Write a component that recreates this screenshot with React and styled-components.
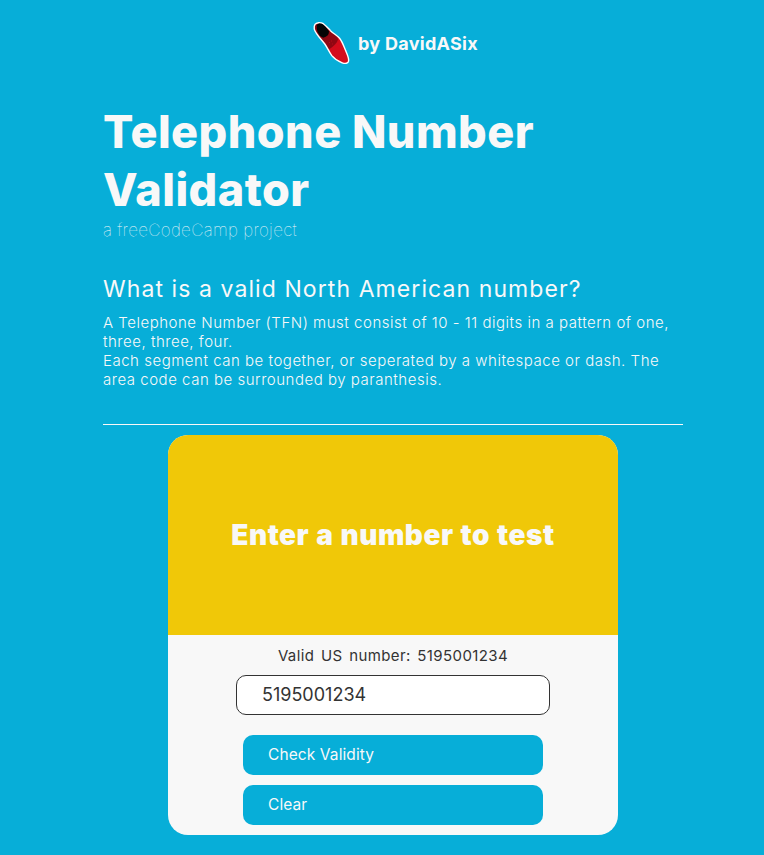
import React, { useState } from 'react';
import styled, { createGlobalStyle } from 'styled-components';

const BLUE = '#07aed8';
const LIGHT = '#f8f8f8';
const DARK = '#333333';

const GlobalStyle = createGlobalStyle`
  *, *::before, *::after { box-sizing: border-box; }
  html, body { margin: 0; background: ${BLUE}; }
  body { font-family: Inter, sans-serif; color: ${LIGHT}; }
  h1, h2, p { margin: 0; }
`;

const Page = styled.main`
  width: 580px;
  height: 855px;
  margin-left: 103px;
  display: flex;
  flex-direction: column;
`;

const Brand = styled.header`
  height: 103px;
  padding: 20px 0 0 208px;
  display: flex;
  align-items: flex-start;
  gap: 7px;
`;

const ShoeIcon = styled.svg`
  display: block;
  width: 40px;
  height: 46px;
  flex: none;
`;

const Byline = styled.span`
  font-size: 18px;
  font-weight: 650;
  line-height: 24px;
  letter-spacing: 0.28px;
  margin-top: 12px;
  white-space: nowrap;
`;

const Title = styled.h1`
  font-size: 45px;
  font-weight: 800;
  line-height: 58px;
  letter-spacing: 0.46px;
`;

const Tagline = styled.p`
  height: 22px;
  font-size: 17px;
  font-weight: 100;
  line-height: 22px;
  letter-spacing: 0.3px;
`;

const Question = styled.h2`
  margin-top: 34px;
  font-size: 23px;
  font-weight: 400;
  line-height: 28px;
  letter-spacing: 1.08px;
  white-space: nowrap;
`;

const Explanation = styled.div`
  margin-top: 10px;
  padding-bottom: 35px;
  border-bottom: 1px solid ${LIGHT};
  font-size: 15px;
  font-weight: 300;
  line-height: 19px;
  letter-spacing: 0.52px;
  white-space: nowrap;
`;

const Card = styled.section`
  width: 450px;
  height: 400px;
  margin: 10px auto 0;
  display: flex;
  flex-direction: column;
  border-radius: 20px;
  overflow: hidden;
  background: ${LIGHT};
  color: ${DARK};
`;

const Result = styled.div`
  height: 200px;
  display: flex;
  align-items: center;
  justify-content: center;
  background: #f0c808;
  color: ${LIGHT};
  font-size: 28px;
  font-weight: 900;
  letter-spacing: 0.5px;
  word-spacing: 1px;
  white-space: nowrap;
`;

const Form = styled.form`
  padding-top: 11px;
  display: flex;
  flex-direction: column;
  align-items: center;
`;

const Label = styled.label`
  font-size: 15px;
  line-height: 20px;
  letter-spacing: 0.4px;
  word-spacing: 2px;
`;

const NumberInput = styled.input`
  width: 314px;
  height: 40px;
  margin: 9px 0 20px;
  padding: 0 25px 1px;
  border: 1px solid ${DARK};
  border-radius: 10px;
  background: #fff;
  color: ${DARK};
  font: 400 18px Inter, sans-serif;
  outline: none;
`;

const Action = styled.button`
  width: 300px;
  height: 40px;
  margin-bottom: 10px;
  padding: 0 25px 1px;
  border: 0;
  border-radius: 10px;
  background: ${BLUE};
  color: ${LIGHT};
  font: 400 15.5px Inter, sans-serif;
  letter-spacing: 0.1px;
  text-align: left;
`;

function Shoe() {
  const outline =
    'M4 4.3C5.2 2.6 9.4 1.9 12.3 3.7C15 5.6 17 8 19.2 10.4C22.2 13.4 26 15.4 28.6 18.2C31.6 22 33 27 35 31.4C36.4 34.8 38 38 37.6 41C37.2 43.6 34.2 43.9 31.2 42.8C26.8 41.2 23.4 38.8 20.8 35.6C17.8 31.6 16.6 28 13.8 24C11.2 20.6 8 17.4 5.6 13.6C3.2 10.2 2.6 6.6 4 4.3Z';
  return (
    <ShoeIcon viewBox="0 0 40 46" aria-hidden="true">
      <clipPath id="shoe-body">
        <path d={outline} />
      </clipPath>
      <g clipPath="url(#shoe-body)">
        <rect width="40" height="46" fill="#d40c1c" />
        <path d="M0 0H22L27 19.5Q26 24 18.5 29L0 24Z" fill="#8f0712" />
        <path d="M5.8 5.2Q7 2.5 11 2.8Q15 6.5 18 11.4Q18 16 12.2 17.8Q8.5 16.4 6.8 12.4Q5.2 8.5 5.8 5.2Z" fill="#050505" />
        <path d="M18 22.5h1M20 21h1M21 24h1" stroke="#b70a18" />
      </g>
      <path d={outline} fill="none" stroke="#fff" strokeWidth="1.4" />
    </ShoeIcon>
  );
}

export default function App() {
  const [number, setNumber] = useState('5195001234');
  return (
    <>
      <GlobalStyle />
      <Page>
        <Brand>
          <Shoe />
          <Byline>by DavidASix</Byline>
        </Brand>
        <Title>Telephone Number Validator</Title>
        <Tagline>a freeCodeCamp project</Tagline>
        <Question>What is a valid North American number?</Question>
        <Explanation>
          <p>
            A Telephone Number (TFN) must consist of 10 - 11 digits in a pattern of one,
            <br />
            three, three, four.
          </p>
          <p>
            Each segment can be together, or seperated by a whitespace or dash. The
            <br />
            area code can be surrounded by paranthesis.
          </p>
        </Explanation>
        <Card>
          <Result>Enter a number to test</Result>
          <Form onSubmit={e => e.preventDefault()}>
            <Label htmlFor="tel">Valid US number: 5195001234</Label>
            <NumberInput id="tel" value={number} onChange={e => setNumber(e.target.value)} />
            <Action type="submit">Check Validity</Action>
            <Action type="button" onClick={() => setNumber('')}>Clear</Action>
          </Form>
        </Card>
      </Page>
    </>
  );
}
